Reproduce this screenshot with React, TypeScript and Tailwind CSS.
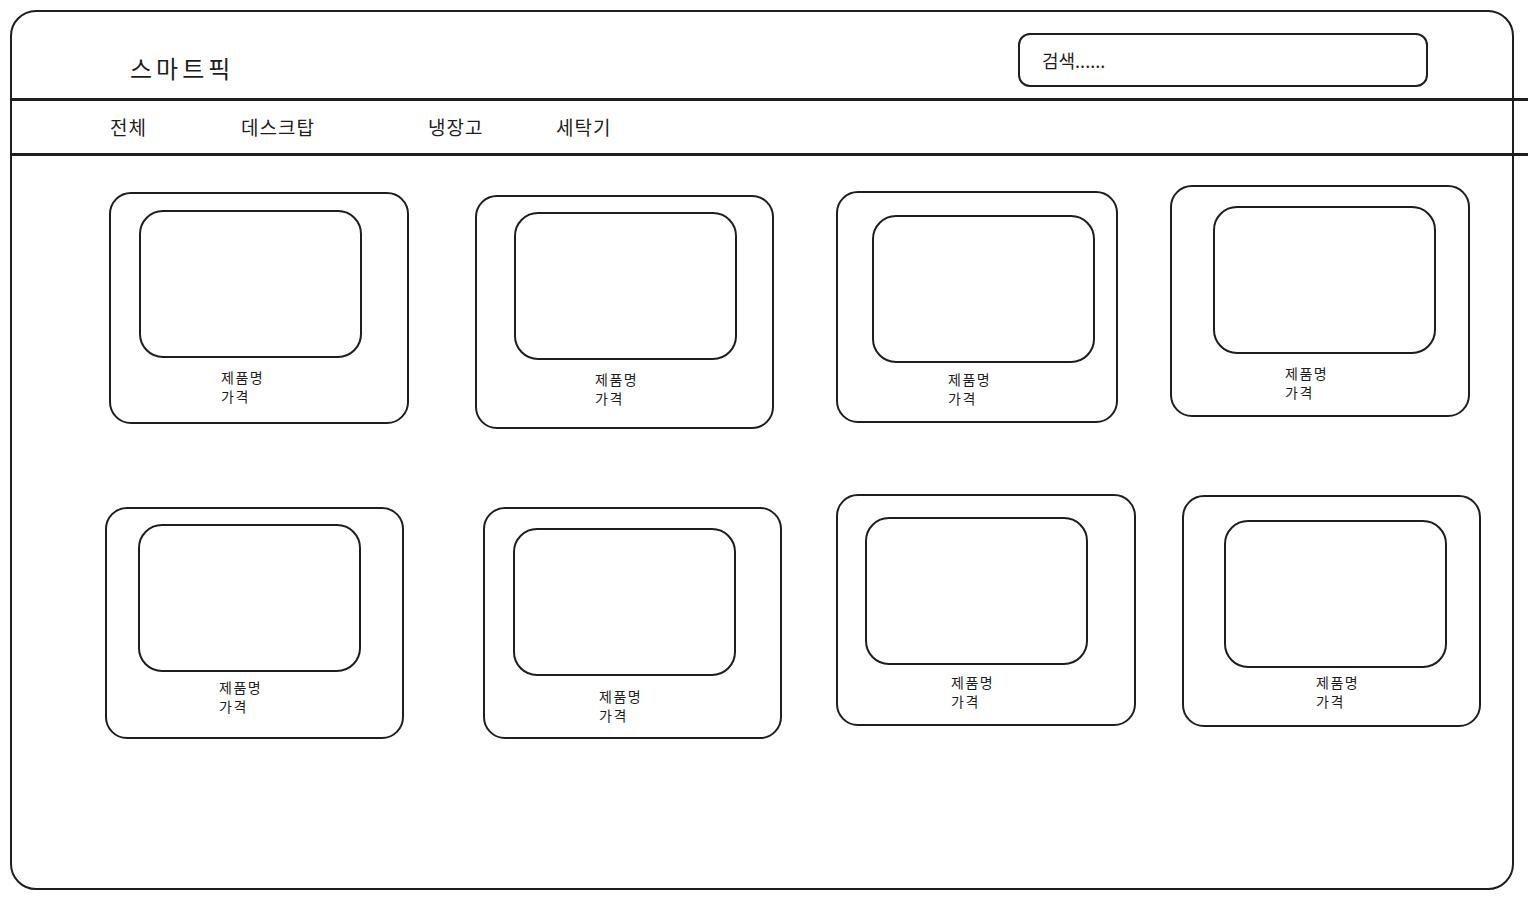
const font = { fontFamily: '"Noto Sans CJK KR", "Noto Sans", sans-serif' };

type Card = {
  wrap: string;
  inner: string;
  text: string;
};

// each card sits slightly off-grid, like the hand-drawn wireframe
const rowOne: Card[] = [
  { wrap: "ml-[97px] mt-[36px] w-[300px] h-[232px]", inner: "ml-[28px] mt-[16px]", text: "ml-[110px] mt-[10px]" },
  { wrap: "ml-[66px] mt-[39px] w-[299px] h-[234px]", inner: "ml-[37px] mt-[15px]", text: "ml-[118px] mt-[10px]" },
  { wrap: "ml-[62px] mt-[35px] w-[282px] h-[232px]", inner: "ml-[34px] mt-[22px]", text: "ml-[110px] mt-[7px]" },
  { wrap: "ml-[52px] mt-[29px] w-[300px] h-[232px]", inner: "ml-[41px] mt-[19px]", text: "ml-[113px] mt-[10px]" },
];

const rowTwo: Card[] = [
  { wrap: "ml-[93px] mt-[78px] w-[299px] h-[232px]", inner: "ml-[31px] mt-[15px]", text: "ml-[112px] mt-[6px]" },
  { wrap: "ml-[79px] mt-[78px] w-[299px] h-[232px]", inner: "ml-[28px] mt-[19px]", text: "ml-[114px] mt-[11px]" },
  { wrap: "ml-[54px] mt-[65px] w-[300px] h-[232px]", inner: "ml-[27px] mt-[21px]", text: "ml-[113px] mt-[8px]" },
  { wrap: "ml-[46px] mt-[66px] w-[299px] h-[232px]", inner: "ml-[40px] mt-[23px]", text: "ml-[132px] mt-[5px]" },
];

function ProductCard({ card }: { card: Card }) {
  return (
    <div className={`${card.wrap} shrink-0 rounded-[22px] border-2 border-[#1e1e1e]`}>
      <div className={`${card.inner} h-[148px] w-[223px] rounded-[24px] border-2 border-[#1e1e1e]`} />
      <div className={`${card.text} text-[14px] leading-[19px] tracking-[1.5px] text-[#1e1e1e]`}>
        <p>제품명</p>
        <p>가격</p>
      </div>
    </div>
  );
}

export default function App() {
  return (
    <div className="min-h-[900px] bg-white pt-[10px]" style={font}>
      <div className="ml-[10px] h-[880px] w-[1504px] rounded-[26px] border-2 border-[#1e1e1e]">
        <header className="flex h-[86px] items-start">
          <h1 className="ml-[118px] mt-[42px] text-[24px] leading-[28px] tracking-[4px] text-[#1e1e1e]">
            스마트픽
          </h1>
          <div className="ml-auto mr-[84px] mt-[21px] flex h-[54px] w-[410px] items-start rounded-[12px] border-2 border-[#1e1e1e] pl-[22px] pt-[13px]">
            <span className="text-[18px] leading-[24px] text-[#1e1e1e]">검색......</span>
          </div>
        </header>
        <div className="h-[3px] w-[calc(100%+16px)] bg-[#1e1e1e]" />
        <nav className="flex h-[52px] items-center pl-[98px] text-[19px] tracking-[1px] text-[#1e1e1e]">
          <span className="w-[131px]">전체</span>
          <span className="w-[187px]">데스크탑</span>
          <span className="w-[128px]">냉장고</span>
          <span>세탁기</span>
        </nav>
        <div className="h-[3px] w-[calc(100%+16px)] bg-[#1e1e1e]" />
        <div className="flex items-start">
          {rowOne.map((c, i) => (
            <ProductCard key={i} card={c} />
          ))}
        </div>
        <div className="flex items-start">
          {rowTwo.map((c, i) => (
            <ProductCard key={i} card={c} />
          ))}
        </div>
      </div>
    </div>
  );
}
